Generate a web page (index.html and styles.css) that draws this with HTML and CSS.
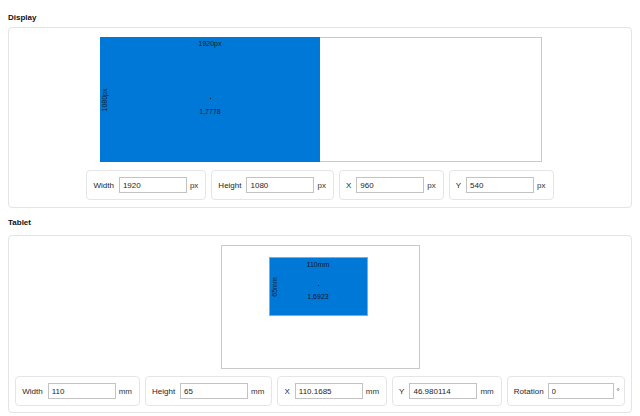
FILE: index.html
```html
<!DOCTYPE html>
<html lang="en">
<head>
  <meta charset="UTF-8" />
  <title>Display and Tablet Mapping</title>
  <link rel="stylesheet" href="styles.css">
</head>
<body>
  <div class="page">
    <!-- Display area -->
    <h3 class="group-title">Display</h3>
    <section class="group">
      <div class="preview preview-display">
        <div class="area area-display">
          <span class="dim-top">1920px</span>
          <span class="dim-side">1080px</span>
          <span class="ratio"><span class="dot"></span>1,7778</span>
        </div>
      </div>
      <div class="fields">
        <div class="field"><label>Width</label><input type="text" value="1920"><span class="unit">px</span></div>
        <div class="field"><label>Height</label><input type="text" value="1080"><span class="unit">px</span></div>
        <div class="field"><label>X</label><input type="text" value="960"><span class="unit">px</span></div>
        <div class="field"><label>Y</label><input type="text" value="540"><span class="unit">px</span></div>
      </div>
    </section>

    <!-- Tablet area -->
    <h3 class="group-title">Tablet</h3>
    <section class="group group-tablet">
      <div class="preview preview-tablet">
        <div class="area area-tablet">
          <span class="dim-top">110mm</span>
          <span class="dim-side">65mm</span>
          <span class="ratio"><span class="dot"></span>1,6923</span>
        </div>
      </div>
      <div class="fields fields-tablet">
        <div class="field"><label>Width</label><input type="text" value="110"><span class="unit">mm</span></div>
        <div class="field"><label>Height</label><input type="text" value="65"><span class="unit">mm</span></div>
        <div class="field"><label>X</label><input type="text" value="110.1685"><span class="unit">mm</span></div>
        <div class="field"><label>Y</label><input type="text" value="46.980114"><span class="unit">mm</span></div>
        <div class="field field-rotation"><label>Rotation</label><input type="text" value="0"><span class="unit">°</span></div>
      </div>
    </section>
  </div>
</body>
</html>
```

FILE: styles.css
```css
/* ------------------ Global ------------------ */
body {
  margin: 0;
  background: #fff;
  font-family: "Liberation Sans", Arial, sans-serif;
  font-size: 8px;
  color: #1e1e1e;
}
.page {
  width: 640px;
  padding-top: 11px;
}

/* ------------------ Groups ------------------ */
.group-title {
  margin: 0 0 2px 8px;
  font-size: 8px;
  line-height: 14px;
  font-weight: bold;
  color: #111;
}
.group {
  margin: 0 8px;
  padding: 9px 0 7px;
  border: 1px solid #e2e4e6;
  border-radius: 4px;
}
.group + .group-title {
  margin-top: 8px;
  margin-bottom: 5px;
}
.group-tablet {
  padding-bottom: 6px;
}

/* ------------------ Preview ------------------ */
.preview {
  position: relative;
  margin: 0 auto;
  box-sizing: border-box;
  border: 1px solid #c9c9c9;
  background: #fff;
}
.preview-display {
  width: 442px;
  height: 125px;
  margin: 0 0 8px 91px;
}
.preview-tablet {
  width: 199px;
  height: 124px;
  margin-bottom: 7px;
}
.area {
  position: absolute;
  background: #0078d7;
  color: #1a1a1a;
  font-size: 7px;
  line-height: 12px;
}
.area-display {
  left: -1px;
  top: -1px;
  width: 220px;
  height: 125px;
}
.area-tablet {
  left: 48px;
  top: 12px;
  width: 97px;
  height: 57px;
  box-shadow: 0 0 0 1px #6fb0e8;
}
.dim-top {
  display: block;
  text-align: center;
  margin-top: 1px;
}
.dim-side {
  position: absolute;
  left: 0;
  top: 50%;
  writing-mode: vertical-rl;
  transform: translateY(-50%) rotate(180deg);
  line-height: 9px;
}
.ratio {
  position: absolute;
  left: 0;
  right: 0;
  top: 50%;
  margin-top: -2px;
  text-align: center;
}
.dot {
  display: block;
  width: 1px;
  height: 1px;
  margin: 0 auto 7px;
  background: #222;
}
.area-tablet .dot {
  margin-bottom: 5px;
}

/* ------------------ Fields ------------------ */
.fields {
  display: flex;
  justify-content: center;
  gap: 5px;
}
.field {
  display: flex;
  align-items: center;
  height: 30px;
  box-sizing: border-box;
  padding: 0 7px 0 6px;
  border: 1px solid #e3e5e8;
  border-radius: 4px;
}
.field label {
  margin-right: 5px;
}
.field input {
  width: 68px;
  height: 16px;
  box-sizing: border-box;
  padding: 0 3px;
  border: 1px solid #c3c3c3;
  font-family: inherit;
  font-size: 8px;
  color: #1e1e1e;
  outline: none;
}
.field-rotation {
  padding-right: 4px;
}
.field-rotation label {
  margin-right: 4px;
}
.field-rotation input {
  width: 66px;
}
.unit {
  margin-left: 3px;
  color: #333;
}
```
